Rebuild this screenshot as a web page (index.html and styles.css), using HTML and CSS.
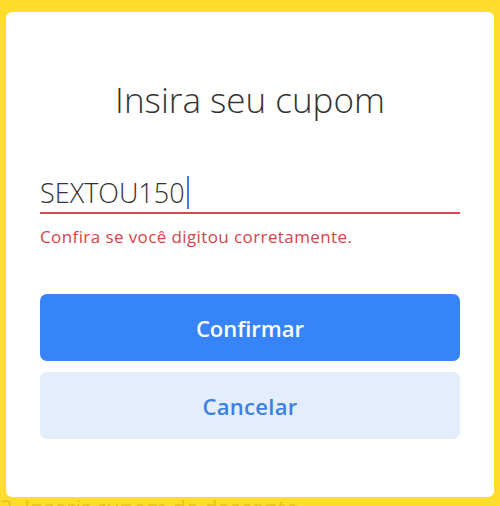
FILE: index.html
```html
<!DOCTYPE html>
<html lang="pt-BR">
<head>
<meta charset="utf-8">
<title>Insira seu cupom</title>
<link rel="stylesheet" href="styles.css">
</head>
<body>
<main class="page">
  <p class="page-step">2. Inserir cupom de desconto</p>
</main>
<div class="modal" role="dialog" aria-labelledby="modal-title">
  <h1 class="modal-title" id="modal-title">Insira seu cupom</h1>
  <div class="field">
    <div class="field-input"><span class="field-value">SEXTOU150</span><span class="caret"></span></div>
    <p class="field-error">Confira se você digitou corretamente.</p>
  </div>
  <div class="actions">
    <button class="btn btn-primary" type="button">Confirmar</button>
    <button class="btn btn-secondary" type="button">Cancelar</button>
  </div>
</div>
</body>
</html>
```
FILE: styles.css
```css
* { box-sizing: border-box; }
html, body { margin: 0; padding: 0; }
body {
  width: 500px;
  height: 506px;
  overflow: hidden;
  background: #fedd2e;
  font-family: "Open Sans", "Lato", sans-serif;
}
.page { padding-top: 494px; }
.page-step {
  margin: 0;
  font-size: 22px;
  line-height: 26px;
  color: #e8c421;
}
.modal {
  position: fixed;
  left: 6px;
  top: 12px;
  width: 488px;
  height: 485px;
  background: #ffffff;
  border-radius: 6px;
  padding: 66px 34px 0;
}
.modal-title {
  margin: 0;
  text-align: center;
  font-size: 35px;
  line-height: 44px;
  font-weight: 300;
  color: #333333;
}
.field { margin-top: 48px; }
.field-input {
  display: flex;
  align-items: center;
  height: 44px;
  padding-top: 3px;
  border-bottom: 2px solid #d9464d;
  font-size: 27px;
  color: #333333;
  font-weight: 300;
}
.caret {
  width: 2px;
  height: 33px;
  margin-left: 2px;
  background: #3d7fe0;
}
.field-error {
  margin: 12px 0 0;
  font-size: 17px;
  line-height: 21px;
  letter-spacing: 0.4px;
  color: #d6434d;
  font-weight: 500;
}
.actions {
  margin-top: 47px;
  display: flex;
  flex-direction: column;
  gap: 11px;
}
.btn {
  height: 67px;
  border: 0;
  border-radius: 7px;
  font-family: inherit;
  font-size: 22px;
  font-weight: 600;
}
.btn-primary { background: #3684f8; color: #ffffff; }
.btn-secondary { background: #e3edfb; color: #3b80e2; letter-spacing: 0.3px; }
```
